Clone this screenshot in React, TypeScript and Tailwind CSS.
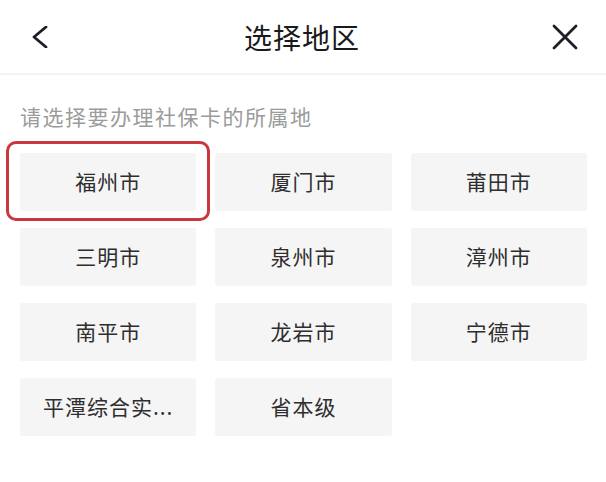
import React from "react";

const cities = [
  "福州市",
  "厦门市",
  "莆田市",
  "三明市",
  "泉州市",
  "漳州市",
  "南平市",
  "龙岩市",
  "宁德市",
  "平潭综合实验区",
  "省本级",
];

const font = { fontFamily: '"Noto Sans CJK SC", "Noto Sans", sans-serif' };

// long names get cut to 5 chars + "..."
const label = (c: string) => (c.length > 6 ? c.slice(0, 5) + "..." : c);

const App = () => {
  const selected = "福州市";

  return (
    <div className="w-[606px] h-[482px] bg-white overflow-hidden" style={font}>
      <div className="relative flex items-center justify-between h-[75px] px-[28px] border-b-2 border-[#f3f3f3]">
        <button className="w-[24px] h-[24px] flex items-center justify-center text-[#1e1e28]">
          <svg width="20" height="22" viewBox="0 0 20 22" fill="none">
            <path d="M16 1 L4 11 L16 21" stroke="currentColor" strokeWidth="2.8" strokeLinecap="round" strokeLinejoin="round" />
          </svg>
        </button>
        <div className="text-[28px] leading-none text-[#1a1a1a] tracking-[1px]">选择地区</div>
        <button className="w-[26px] h-[26px] flex items-center justify-center text-[#1e1e28]">
          <svg width="26" height="26" viewBox="0 0 26 26" fill="none">
            <path d="M2 2 L24 24 M24 2 L2 24" stroke="currentColor" strokeWidth="2.8" strokeLinecap="round" />
          </svg>
        </button>
      </div>

      <div className="pl-5 pt-[31px] text-[21px] leading-none text-[#9b9b9b] tracking-[1.5px]">
        请选择要办理社保卡的所属地
      </div>

      <div className="grid grid-cols-3 gap-x-[19px] gap-y-[17px] pl-5 pr-[19px] pt-[26px]">
        {cities.map((c) => (
          <div
            key={c}
            className="relative h-[58px] flex items-center justify-center bg-[#f5f5f5] rounded-[3px] text-[21px] text-[#2e2e2e] tracking-[1px]"
          >
            <span className="whitespace-nowrap">{label(c)}</span>
            {c === selected && (
              <div className="absolute -inset-x-[14px] -top-[12px] -bottom-[10px] border-[3px] border-[#c9383d] rounded-[10px]" />
            )}
          </div>
        ))}
      </div>
    </div>
  );
};

export default App;
